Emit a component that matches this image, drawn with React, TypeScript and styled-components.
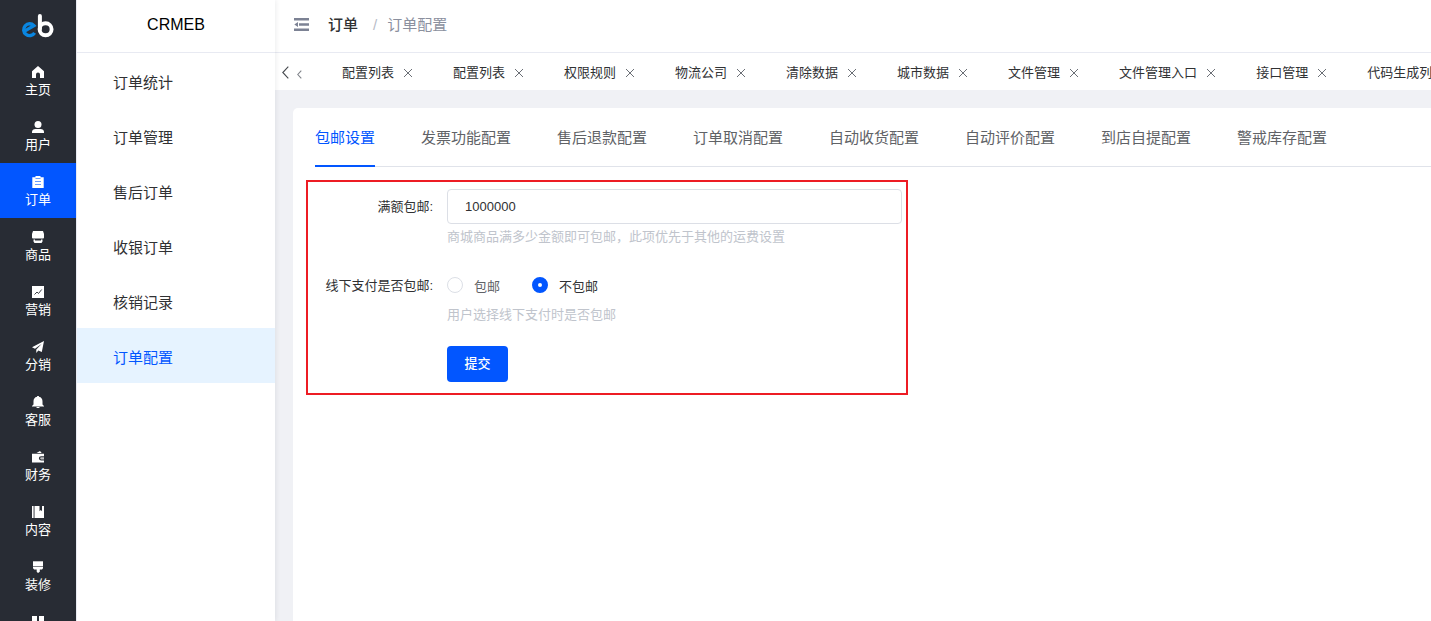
import React, { useState } from "react";
import styled, { createGlobalStyle } from "styled-components";

const blue = "#0256ff";
const line = "#e8eaf2";

const Global = createGlobalStyle`
  *, *::before, *::after { box-sizing: border-box; }
  body {
    margin: 0;
    font-family: "Liberation Sans", "Noto Sans CJK SC", sans-serif;
    font-size: 13px;
    color: #303133;
    background: #f0f1f5;
  }
  button, input { font: inherit; }
  button { border: 0; background: none; padding: 0; cursor: pointer; color: inherit; }
  a { color: inherit; text-decoration: none; }
  ul { list-style: none; margin: 0; padding: 0; }
  svg { display: block; flex: none; }
`;

const Page = styled.div`
  display: grid;
  grid-template-columns: 76px 199px minmax(0, 1fr);
  height: 100vh;
  overflow: hidden;
`;

const Rail = styled.nav`
  background: #282c34;
  color: #fff;
  overflow: hidden;
`;

const LogoLink = styled.a`
  display: flex;
  justify-content: center;
  height: 53px;
  padding-top: 13px;
`;

const RailLink = styled.a<{ $active?: boolean }>`
  display: flex;
  flex-direction: column;
  align-items: center;
  gap: 2px;
  height: 55px;
  padding-top: 13px;
  line-height: 20px;
  background: ${(p) => (p.$active ? blue : "transparent")};
`;

const SubMenu = styled.aside`
  position: relative;
  z-index: 1;
  background: #fff;
  border-left: 1px solid ${line};
  box-shadow: 1px 0 5px rgba(0, 21, 41, 0.08);
`;

const SubTitle = styled.h1`
  margin: 0;
  height: 53px;
  border-bottom: 1px solid ${line};
  font-size: 16px;
  font-weight: 400;
  line-height: 50px;
  text-align: center;
  color: #000;
`;

const SubLink = styled.a<{ $active?: boolean }>`
  display: block;
  height: 55px;
  padding: 3px 36px 0;
  font-size: 15px;
  line-height: 54px;
  color: ${(p) => (p.$active ? blue : "#303133")};
  background: ${(p) => (p.$active ? "#e6f3ff" : "transparent")};
`;

const Main = styled.main`
  display: flex;
  flex-direction: column;
  min-width: 0;
`;

const Header = styled.header`
  display: flex;
  align-items: center;
  gap: 19px;
  height: 53px;
  padding: 0 19px 3px;
  background: #fff;
  border-bottom: 1px solid ${line};
`;

const Crumbs = styled.ol`
  display: flex;
  gap: 10px;
  margin: 0;
  padding: 0;
  list-style: none;
  font-size: 15px;
  line-height: 24px;
  color: #8b909e;
`;

const Crumb = styled.li<{ $current?: boolean }>`
  display: flex;
  gap: 15px;
  color: ${(p) => (p.$current ? "#8b909e" : "#303133")};
  font-weight: ${(p) => (p.$current ? 400 : 500)};
`;

const Slash = styled.span`
  color: #b8bcc8;
  font-weight: 400;
`;

const OpenTabs = styled.div`
  display: flex;
  align-items: center;
  height: 37px;
  padding: 2px 0 0 7px;
  background: #fff;
  overflow: hidden;
`;

const Arrows = styled.div`
  display: flex;
  align-items: flex-end;
  gap: 8px;
  width: 60px;
  padding-bottom: 1px;
  flex: none;
`;

const TabList = styled.ul`
  display: flex;
  gap: 38px;
  white-space: nowrap;
`;

const OpenTab = styled.li`
  display: flex;
  align-items: center;
  gap: 7px;
  line-height: 20px;
`;

const Close = styled.button`
  width: 14px;
  height: 14px;
  display: grid;
  place-items: center;
  color: #6b6f76;
`;

const Card = styled.section`
  flex: 1;
  margin: 18px 0 0 18px;
  background: #fff;
  border-radius: 5px 0 0 0;
`;

const ConfigTabs = styled.div`
  display: flex;
  gap: 46px;
  height: 59px;
  margin-left: 22px;
  box-shadow: inset 0 -1px #e0e3ea;
  white-space: nowrap;
  overflow: hidden;
`;

const ConfigTab = styled.button<{ $active: boolean }>`
  flex: none;
  font-size: 15px;
  color: ${(p) => (p.$active ? blue : "#606266")};
  border-bottom: 2px solid ${(p) => (p.$active ? blue : "transparent")};
`;

const Form = styled.form`
  display: grid;
  grid-template-columns: 125px minmax(0, 1fr);
  column-gap: 14px;
  max-width: 602px;
  margin: 13px 13px 0;
  padding: 7px 4px 11px 0;
  border: 2px solid #ed1c24;
`;

const FieldLabel = styled.label`
  line-height: 35px;
  text-align: right;
`;

const Field = styled.div`
  padding-bottom: 18px;
`;

const TextInput = styled.input`
  display: block;
  width: 100%;
  height: 35px;
  padding: 0 17px;
  border: 1px solid #dcdfe6;
  border-radius: 4px;
  color: #303133;
  outline: none;
`;

const Hint = styled.p`
  margin: 0;
  line-height: 26px;
  color: #c0c4cc;
`;

const Radios = styled.div`
  display: flex;
  gap: 32px;
  height: 34px;
`;

const RadioLabel = styled.label<{ $on: boolean }>`
  display: flex;
  align-items: center;
  gap: 11px;
  color: ${(p) => (p.$on ? "#303133" : "#606266")};
`;

const Radio = styled.input`
  appearance: none;
  width: 16px;
  height: 16px;
  margin: 0;
  border: 1px solid #dcdfe6;
  border-radius: 50%;
  background: #fff;
  &:checked {
    border: 6px solid ${blue};
  }
`;

const Submit = styled.button`
  grid-column: 2;
  justify-self: start;
  width: 61px;
  height: 36px;
  padding-bottom: 3px;
  border-radius: 4px;
  color: #fff;
  background: ${blue};
  font-weight: 500;
`;

const Logo = () => (
  <svg width="34" height="26" viewBox="0 0 34 26" fill="none" aria-hidden="true">
    <path d="M3.200 18.400 12.900 12.700A5.900 5.900 0 1 0 13.600 19.800" stroke="#0a86e0" strokeWidth="3.400" />
    <path d="M18.900 3v13" stroke="#fff" strokeWidth="4" strokeLinecap="round" />
    <circle cx="24.600" cy="16.300" r="6" stroke="#fff" strokeWidth="3.900" />
  </svg>
);

const glyphs: Record<string, React.ReactNode> = {
  home: <path d="M6.500.6 12.500 5.800v6.700H8.500V9a2 2 0 0 0-4 0v3.500h-4V5.800z" />,
  user: <><circle cx="6.500" cy="4" r="3.500" /><path d="M.5 12.500v-1c0-2 1.500-3 3.500-3h5c2 0 3.500 1 3.500 3v1z" /></>,
  order: <><path d="M.8 1.700h3.200V.5h5v1.200h3.200v10.800H.8z" /><path d="M4 3h5M3.500 6h6M3.500 9h6" stroke={blue} strokeOpacity=".6" /></>,
  goods: <><path d="M1.500.5h10l1 3v3.500a1 1 0 0 1-1 1h-10a1 1 0 0 1-1-1V3.500z" /><path d="M2 9h1.500v1h6V9H11v2l-1 1.500H3L2 11z" /></>,
  market: <><path d="M.5.500h12v12H.5z" /><path d="m3 9 2.500-2.500L7 8l3.200-4" fill="none" stroke="#282c34" strokeWidth=".9" /></>,
  send: <path d="M12.500.5.5 6.700l3 1.500L10.300 3.300 4.800 9v3.500l2-2.500 3.500 1.600z" />,
  bell: <path d="M5.600.5h1.800v.8C10 1.800 11 3.700 11 6v3l1.500 1.500v.5H.5v-.5L2 9V6c0-2.300 1-4.200 3.600-4.700zM4.700 11.500h3.600c-.4 1.300-3.200 1.300-3.600 0z" />,
  wallet: <><path d="m5 2.600 3.500-2 1.700 2zM.5 3.300h12v2.400h-3a2.100 2.100 0 0 0 0 4.200h3v2.100H.5z" /><path d="M9.700 6.700h2.800v2.200H9.700a1.100 1.100 0 0 1 0-2.200z" opacity=".7" /></>,
  book: <path d="M.5.500h1.600v12H.5zM3 .5h5v5.200l1.300-1.200 1.200 1.200V.5h2v12H3z" />,
  brush: <><path d="M1.500.8h10v5.100h-10z" /><path d="M1.500 6.500h10v1.300l-1 1.200H8.300v2.300L6.500 12.500l-1.300-1.200V9h-2.500l-1.200-1.200z" /></>,
  grid: <path d="M.5.5h5v5h-5zM7.500.5h5v5h-5zM.5 7.500h5v5h-5zM7.500 7.500h5v5h-5z" />,
};

const Glyph = ({ name }: { name: string }) => (
  <svg width="12" height="12" viewBox="0.5 0.5 12 12" fill="#fff" aria-hidden="true">
    {glyphs[name]}
  </svg>
);

const FoldIcon = () => (
  <svg width="15" height="13" viewBox="0 0 15 13" fill="#7c8294" aria-hidden="true">
    <path d="M0 0h15v2.600H0zM5 5.200h10v2.600H5zM0 10.400h15V13H0zM4 4v5L.300 6.500z" />
  </svg>
);

const Chevron = ({ small }: { small?: boolean }) => (
  <svg width={small ? 5 : 7} height={small ? 9 : 13} viewBox={small ? "0 0 5 9" : "0 0 7 13"} fill="none" stroke={small ? "#7f8389" : "#45484d"} strokeWidth="1.100" aria-hidden="true">
    <path d={small ? "M4.300.7.800 4.500l3.500 3.800" : "M6.300.7.800 6.500l5.500 5.800"} />
  </svg>
);

const Cross = () => (
  <svg width="10" height="10" viewBox="0 0 10 10" fill="none" stroke="currentColor" aria-hidden="true">
    <path d="m1 1 8 8M9 1 1 9" />
  </svg>
);

const rail = [
  ["home", "主页"],
  ["user", "用户"],
  ["order", "订单"],
  ["goods", "商品"],
  ["market", "营销"],
  ["send", "分销"],
  ["bell", "客服"],
  ["wallet", "财务"],
  ["book", "内容"],
  ["brush", "装修"],
];

const subLinks = ["订单统计", "订单管理", "售后订单", "收银订单", "核销记录", "订单配置"];

const openTabs = ["配置列表", "配置列表", "权限规则", "物流公司", "清除数据", "城市数据", "文件管理", "文件管理入口", "接口管理", "代码生成列表"];

const configTabs = ["包邮设置", "发票功能配置", "售后退款配置", "订单取消配置", "自动收货配置", "自动评价配置", "到店自提配置", "警戒库存配置"];

export default function App() {
  const [tab, setTab] = useState(configTabs[0]);
  const [offline, setOffline] = useState("不包邮");

  return (
    <Page>
      <Global />
      <Rail>
        <LogoLink href="#" aria-label="CRMEB"><Logo /></LogoLink>
        {rail.map(([icon, label]) => (
          <RailLink key={icon} href="#" $active={icon === "order"}>
            <Glyph name={icon} />
            {label}
          </RailLink>
        ))}
        <RailLink href="#" aria-label="应用"><Glyph name="grid" /></RailLink>
      </Rail>

      <SubMenu>
        <SubTitle>CRMEB</SubTitle>
        {subLinks.map((label) => (
          <SubLink key={label} href="#" $active={label === "订单配置"}>{label}</SubLink>
        ))}
      </SubMenu>

      <Main>
        <Header>
          <button type="button" aria-label="折叠菜单"><FoldIcon /></button>
          <Crumbs>
            <Crumb>订单 <Slash>/</Slash></Crumb>
            <Crumb $current>订单配置</Crumb>
          </Crumbs>
        </Header>

        <OpenTabs>
          <Arrows>
            <button type="button" aria-label="向左滚动"><Chevron /></button>
            <button type="button" aria-label="上一个"><Chevron small /></button>
          </Arrows>
          <TabList>
            {openTabs.map((label, i) => (
              <OpenTab key={i}>
                <a href="#">{label}</a>
                <Close type="button" aria-label="关闭"><Cross /></Close>
              </OpenTab>
            ))}
          </TabList>
        </OpenTabs>

        <Card>
          <ConfigTabs role="tablist">
            {configTabs.map((label) => (
              <ConfigTab key={label} type="button" role="tab" aria-selected={tab === label} $active={tab === label} onClick={() => setTab(label)}>
                {label}
              </ConfigTab>
            ))}
          </ConfigTabs>

          <Form onSubmit={(e) => e.preventDefault()}>
            <FieldLabel htmlFor="amount">满额包邮:</FieldLabel>
            <Field>
              <TextInput id="amount" defaultValue="1000000" />
              <Hint>商城商品满多少金额即可包邮，此项优先于其他的运费设置</Hint>
            </Field>

            <FieldLabel as="span" id="offline">线下支付是否包邮:</FieldLabel>
            <Field>
              <Radios role="radiogroup" aria-labelledby="offline">
                {["包邮", "不包邮"].map((label) => (
                  <RadioLabel key={label} $on={offline === label}>
                    <Radio type="radio" name="offline" checked={offline === label} onChange={() => setOffline(label)} />
                    {label}
                  </RadioLabel>
                ))}
              </Radios>
              <Hint>用户选择线下支付时是否包邮</Hint>
            </Field>

            <Submit type="submit">提交</Submit>
          </Form>
        </Card>
      </Main>
    </Page>
  );
}
